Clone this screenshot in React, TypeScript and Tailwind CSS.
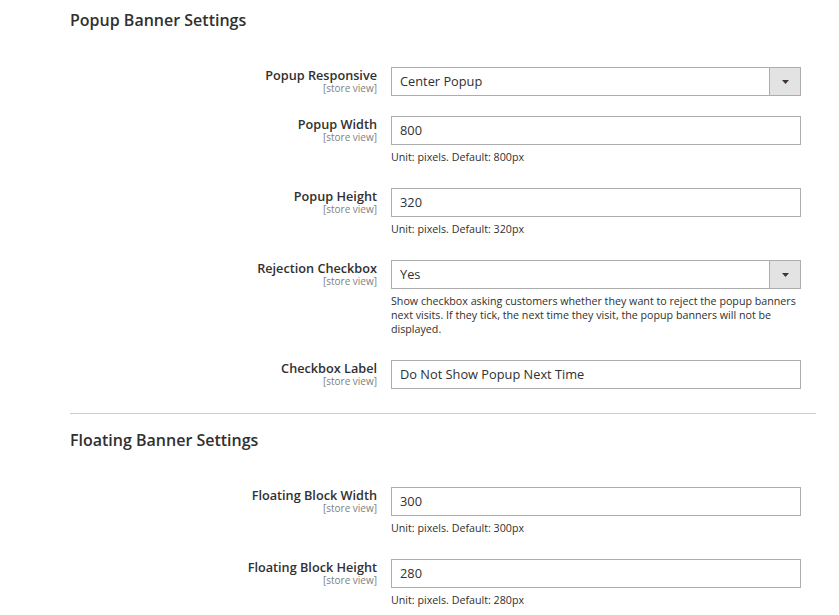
import React from "react";

type Field = {
  label: string;
  value: string;
  select?: boolean;
  note?: string;
};

const popupFields: Field[] = [
  { label: "Popup Responsive", value: "Center Popup", select: true },
  { label: "Popup Width", value: "800", note: "Unit: pixels. Default: 800px" },
  { label: "Popup Height", value: "320", note: "Unit: pixels. Default: 320px" },
  {
    label: "Rejection Checkbox",
    value: "Yes",
    select: true,
    note: "Show checkbox asking customers whether they want to reject the popup banners next visits. If they tick, the next time they visit, the popup banners will not be displayed.",
  },
  { label: "Checkbox Label", value: "Do Not Show Popup Next Time" },
];

const floatingFields: Field[] = [
  { label: "Floating Block Width", value: "300", note: "Unit: pixels. Default: 300px" },
  { label: "Floating Block Height", value: "280", note: "Unit: pixels. Default: 280px" },
];

function FieldRow({ field, last }: { field: Field; last: boolean }) {
  return (
    <div className={`flex ${last ? "" : field.note ? "mb-[24px]" : "mb-[20px]"}`}>
      {/* label column */}
      <div className="w-[307px] shrink-0 text-right">
        <div className="text-[12.7px] leading-[16px] font-semibold text-[#303030]">{field.label}</div>
        <div className="text-[10px] leading-[11px] text-[#808080]">[store view]</div>
      </div>
      {/* control column */}
      <div className="ml-[14px] w-[410px] shrink-0">
        <div className="flex h-[29px] border border-[#adadad] bg-white">
          <div className="flex-1 px-[8px] text-[12.8px] leading-[27px] text-[#303030]">{field.value}</div>
          {field.select && (
            <div className="flex w-[31px] items-center justify-center border-l border-[#adadad] bg-[#e3e3e3]">
              <svg width="7" height="4" viewBox="0 0 7 4">
                <path d="M0 0h7L3.5 4z" fill="#41362f" />
              </svg>
            </div>
          )}
        </div>
        {field.note && (
          <p className="mt-[5px] text-[10.7px] leading-[14px] text-[#303030]">{field.note}</p>
        )}
      </div>
    </div>
  );
}

function Section({ title, fields }: { title: string; fields: Field[] }) {
  return (
    <section>
      <h2 className="text-[16px] leading-[24px] font-semibold text-[#303030]">{title}</h2>
      <div className="mt-[35px]">
        {fields.map((f, i) => (
          <FieldRow key={f.label} field={f} last={i === fields.length - 1} />
        ))}
      </div>
    </section>
  );
}

export default function App() {
  return (
    <div
      className="min-h-screen bg-white pl-[70px] pr-[23px] pt-[8px]"
      style={{ fontFamily: '"Open Sans", "Liberation Sans", sans-serif' }}
    >
      <Section title="Popup Banner Settings" fields={popupFields} />
      <hr className="mt-[24px] mb-[14px] border-0 border-t border-[#cccccc]" />
      <Section title="Floating Banner Settings" fields={floatingFields} />
    </div>
  );
}
